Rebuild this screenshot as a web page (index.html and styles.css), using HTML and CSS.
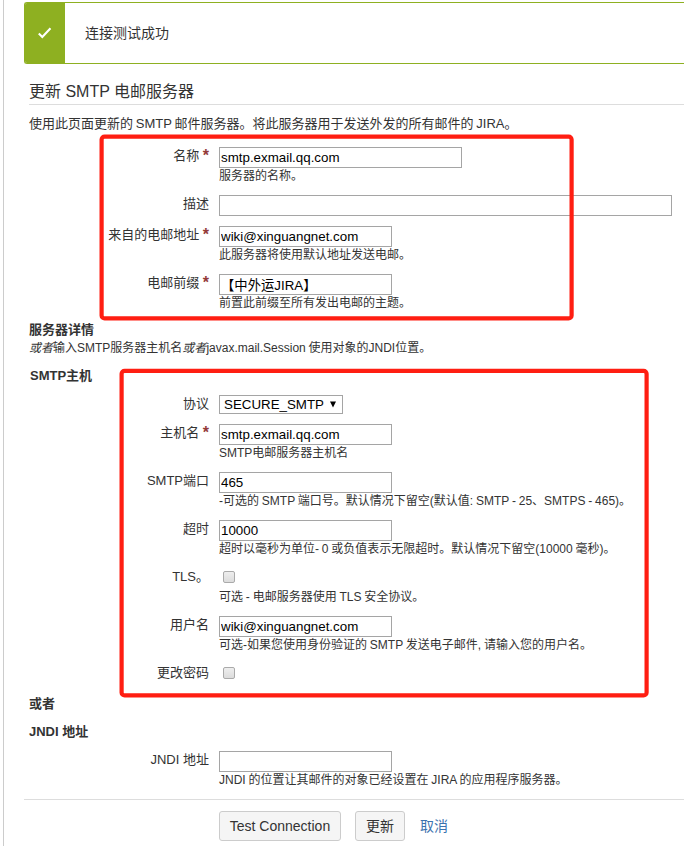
FILE: index.html
```html
<!DOCTYPE html>
<html lang="zh-CN">
<head>
<meta charset="utf-8">
<title>更新 SMTP 电邮服务器</title>
<link rel="stylesheet" href="styles.css">
</head>
<body>
<main class="page">
  <div class="message">
    <div class="message-icon">
      <svg width="16" height="14" viewBox="0 0 16 14"><path d="M1.8 7.5 5.3 11 13.5 2.3" fill="none" stroke="#fff" stroke-width="2.1"/></svg>
    </div>
    <p class="message-text">连接测试成功</p>
  </div>
  <form class="form">
    <h2 class="title">更新 SMTP 电邮服务器</h2>
    <p class="intro">使用此页面更新的 SMTP 邮件服务器。将此服务器用于发送外发的所有邮件的 JIRA。</p>

    <div class="group">
      <label class="label">名称<span class="required">*</span></label>
      <div class="field"><input class="text medium" type="text" value="smtp.exmail.qq.com"><p class="hint">服务器的名称。</p></div>
    </div>
    <div class="group short">
      <label class="label">描述</label>
      <div class="field"><input class="text long" type="text"></div>
    </div>
    <div class="group">
      <label class="label">来自的电邮地址<span class="required">*</span></label>
      <div class="field"><input class="text" type="text" value="wiki@xinguangnet.com"><p class="hint">此服务器将使用默认地址发送电邮。</p></div>
    </div>
    <div class="group last">
      <label class="label">电邮前缀<span class="required">*</span></label>
      <div class="field"><input class="text" type="text" value="【中外运JIRA】"><p class="hint">前置此前缀至所有发出电邮的主题。</p></div>
    </div>

    <h3 class="heading">服务器详情</h3>
    <p class="details"><em>或者</em>输入SMTP服务器主机名<em>或者</em>javax.mail.Session 使用对象的JNDI位置。</p>
    <h3 class="heading host">SMTP主机</h3>

    <div class="group select-row">
      <label class="label">协议</label>
      <div class="field"><div class="select"><span>SECURE_SMTP</span><svg width="6" height="7" viewBox="0 0 6 7"><path d="M0 0.5h6L3 6.5z"/></svg></div></div>
    </div>
    <div class="group">
      <label class="label">主机名<span class="required">*</span></label>
      <div class="field"><input class="text" type="text" value="smtp.exmail.qq.com"><p class="hint">SMTP电邮服务器主机名</p></div>
    </div>
    <div class="group">
      <label class="label">SMTP端口</label>
      <div class="field"><input class="text" type="text" value="465"><p class="hint">-可选的 SMTP 端口号。默认情况下留空(默认值: SMTP - 25、SMTPS - 465)。</p></div>
    </div>
    <div class="group">
      <label class="label">超时</label>
      <div class="field"><input class="text" type="text" value="10000"><p class="hint">超时以毫秒为单位- 0 或负值表示无限超时。默认情况下留空(10000 毫秒)。</p></div>
    </div>
    <div class="group">
      <label class="label">TLS。</label>
      <div class="field"><input class="check" type="checkbox"><p class="hint">可选 - 电邮服务器使用 TLS 安全协议。</p></div>
    </div>
    <div class="group">
      <label class="label">用户名</label>
      <div class="field"><input class="text" type="text" value="wiki@xinguangnet.com"><p class="hint">可选-如果您使用身份验证的 SMTP 发送电子邮件, 请输入您的用户名。</p></div>
    </div>
    <div class="group short">
      <label class="label">更改密码</label>
      <div class="field"><input class="check" type="checkbox"></div>
    </div>

    <h3 class="heading">或者</h3>
    <h3 class="heading jndi">JNDI 地址</h3>
    <div class="group">
      <label class="label">JNDI 地址</label>
      <div class="field"><input class="text" type="text"><p class="hint">JNDI 的位置让其邮件的对象已经设置在 JIRA 的应用程序服务器。</p></div>
    </div>
  </form>
  <div class="actions">
    <button class="button test" type="button">Test Connection</button>
    <button class="button update" type="button">更新</button>
    <a class="cancel">取消</a>
  </div>
  <svg class="marks" width="684" height="846" viewBox="0 0 684 846">
    <rect x="101.6" y="136.6" width="470" height="181.8" rx="3"/>
    <rect x="121.6" y="370.8" width="525" height="324.6" rx="3"/>
  </svg>
</main>
</body>
</html>
```
FILE: styles.css
```css
* { box-sizing: border-box; }
html, body { margin: 0; height: 846px; overflow: hidden; }
body {
  background: #fff;
  color: #333;
  font-family: "Liberation Sans", "Noto Sans CJK SC", sans-serif;
  font-size: 13px;
}
h2, h3, p { margin: 0; }
.page {
  position: relative;
  height: 846px;
  margin-left: 3px;
  padding: 2px 0 0 20px;
  border-left: 1px solid #ccc;
}
.message {
  display: flex;
  height: 62px;
  border: 1px solid #8eb021;
  border-right: 0;
  border-radius: 3px 0 0 3px;
  overflow: hidden;
}
.message-icon {
  display: flex;
  align-items: center;
  justify-content: center;
  width: 40px;
  background: #8eb021;
}
.message-text { padding-left: 20px; font-size: 14px; line-height: 60px; }
.form { height: 735px; padding: 16px 0 0 5px; }
.title {
  height: 25px;
  margin-bottom: 8px;
  border-bottom: 1px solid #ddd;
  font-size: 16px;
  font-weight: 400;
  line-height: 24px;
}
.intro { height: 34px; line-height: 22px; white-space: nowrap; word-spacing: -0.8px; }
.group { display: flex; height: 48px; }
.group.short { height: 31px; }
.group.last { height: 47px; }
.group.select-row { height: 29px; }
.label {
  width: 180px;
  margin-right: 10px;
  height: 18px;
  line-height: 18px;
  text-align: right;
  white-space: nowrap;
}
.required { margin-left: 3.5px; color: #943a38; font-size: 16px; font-weight: 700; line-height: 1px; vertical-align: -1px; }
.field { display: flex; flex-direction: column; align-items: flex-start; }
.text {
  width: 173px;
  height: 21px;
  margin: 0;
  padding: 1px;
  border: 1px solid #a5a5a5;
  color: #000;
  font: 13.333px/17px "Liberation Sans", "Noto Sans CJK SC", sans-serif;
}
.text.medium { width: 243px; }
.text.long { width: 453px; }
.hint { font-size: 12px; line-height: 17px; white-space: nowrap; word-spacing: -0.5px; }
.heading { height: 18px; font-size: 13px; font-weight: 700; line-height: 18px; }
.details { height: 27px; font-size: 12px; line-height: 18px; white-space: nowrap; word-spacing: -0.6px; }
.heading.host { height: 29px; padding-left: 1px; line-height: 20px; }
.select {
  display: flex;
  align-items: center;
  justify-content: space-between;
  width: 124px;
  height: 19px;
  padding: 0 6px 0 4px;
  border: 1px solid #a5a5a5;
  color: #000;
  font-size: 13.333px;
  line-height: 17px;
}
.check {
  appearance: none;
  width: 12px;
  height: 12px;
  margin: 3px 0 6px 4px;
  border: 1px solid #aaa;
  border-radius: 2px;
  background: linear-gradient(#eee, #dcdcdc);
}
.heading.jndi { margin: 10px 0; }
.actions {
  display: flex;
  align-items: flex-start;
  height: 47px;
  padding: 11px 0 0 195px;
  border-top: 1px solid #ddd;
}
.button {
  height: 30px;
  margin: 0 14px 0 0;
  padding: 0;
  border: 1px solid #ccc;
  border-radius: 3px;
  background: #f5f5f5;
  color: #333;
  font: 14px/20px "Liberation Sans", "Noto Sans CJK SC", sans-serif;
}
.test { width: 122px; }
.update { width: 50px; }
.cancel { margin-left: 1px; color: #3b73af; font-size: 14px; line-height: 30px; }
.marks { position: absolute; top: 0; left: -4px; fill: none; stroke: #ff1e12; stroke-width: 4.2; pointer-events: none; }
```
